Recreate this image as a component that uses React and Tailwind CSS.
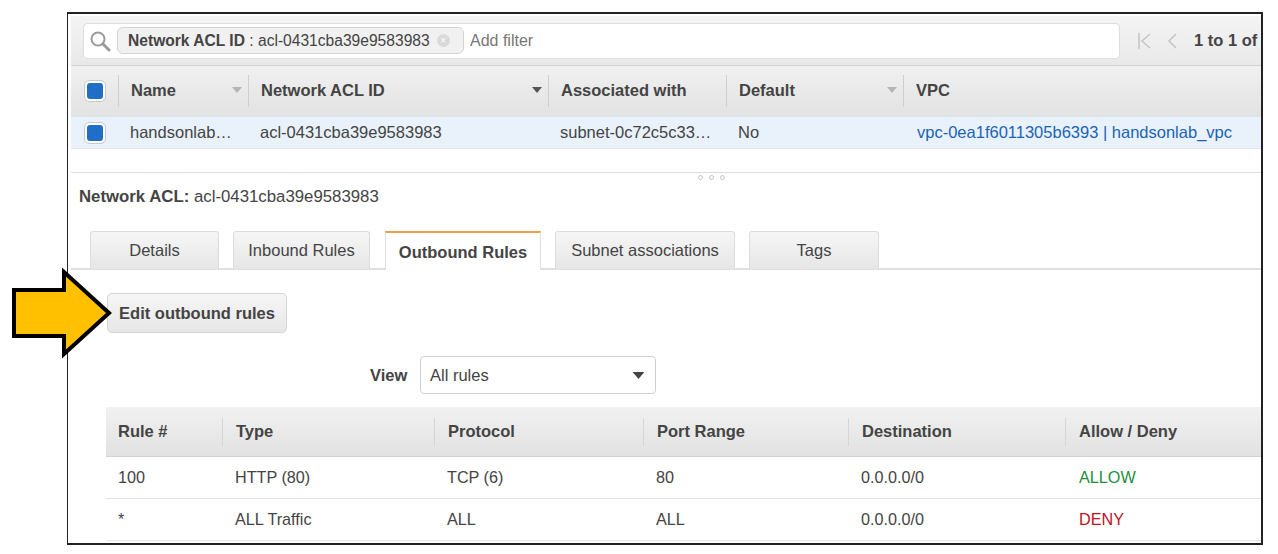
import React from 'react';

const headCols = [
  { label: 'Name', w: 'w-[130px]', caret: 'text-[#b5b5b5]' },
  { label: 'Network ACL ID', w: 'w-[300px]', caret: 'text-[#555]' },
  { label: 'Associated with', w: 'w-[178px]' },
  { label: 'Default', w: 'w-[177px]', caret: 'text-[#b5b5b5]' },
  { label: 'VPC', w: 'w-[355px]' },
];

const ruleCols = [
  { label: 'Rule #', w: 'w-[116px]', first: true },
  { label: 'Type', w: 'w-[212px]' },
  { label: 'Protocol', w: 'w-[209px]' },
  { label: 'Port Range', w: 'w-[205px]' },
  { label: 'Destination', w: 'w-[217px]' },
  { label: 'Allow / Deny', w: 'w-[196px]' },
];

const rules = [
  ['100', 'HTTP (80)', 'TCP (6)', '80', '0.0.0.0/0', 'ALLOW', 'text-[#1d8f3a]'],
  ['*', 'ALL Traffic', 'ALL', 'ALL', '0.0.0.0/0', 'DENY', 'text-[#c0121f]'],
];

const tabs = [
  { label: 'Details', w: 'w-[129px]' },
  { label: 'Inbound Rules', w: 'w-[137px]' },
  { label: 'Outbound Rules', w: 'w-[156px]', active: true },
  { label: 'Subnet associations', w: 'w-[180px]' },
  { label: 'Tags', w: 'w-[130px]' },
];

function Check() {
  return (
    <div className="flex h-[22px] w-[22px] items-center justify-center rounded-[5px] border border-[#c9c9c9] bg-white">
      <div className="h-[16px] w-[16px] rounded-[3px] bg-[#1f6fc9]" />
    </div>
  );
}

function Caret({ className }) {
  return (
    <svg width="10" height="6" viewBox="0 0 10 6" className={className}>
      <path d="M0 0h10L5 6z" fill="currentColor" />
    </svg>
  );
}

export default function App() {
  return (
    <div className="relative h-[554px] w-[1278px] overflow-hidden bg-white pl-[67px] pt-[12px] text-[16.5px] text-[#444] font-['Liberation_Sans',Arial,sans-serif]">
      <div className="h-[533px] w-[1196px] overflow-hidden border-2 border-[#222] border-l-[1.5px] pl-[3px] pt-[2px]">
        {/* filter bar */}
        <div className="flex h-[50px] items-center bg-gradient-to-b from-[#f4f4f4] to-[#e9e9e9] pl-[12px] border-b border-[#d4d4d4]">
          <div className="flex h-[36px] w-[1037px] shrink-0 items-center rounded-[4px] border border-[#dedede] bg-white pl-[5px]">
            <svg width="22" height="22" viewBox="0 0 22 22" fill="none" stroke="#9a9a9a">
              <circle cx="9" cy="9" r="6.5" strokeWidth="2" />
              <path d="M14 14l6 6" strokeWidth="3" strokeLinecap="round" />
            </svg>
            <div className="ml-[6px] flex h-[27px] w-[347px] items-center rounded-[6px] border border-[#d3d3d3] bg-[#f1f1f1] pl-[10px] text-[15.6px] whitespace-nowrap">
              <span className="font-bold">Network ACL ID</span>
              <span>&nbsp;: acl-0431cba39e9583983</span>
              <span className="ml-[7px] flex h-[13px] w-[13px] items-center justify-center rounded-full bg-[#d9d9d9] text-[10px] leading-none text-white">×</span>
            </div>
            <span className="ml-[6px] text-[16px] text-[#777]">Add filter</span>
          </div>
          <div className="ml-[17px] flex items-center whitespace-nowrap">
            <svg width="16" height="18" viewBox="0 0 16 18" fill="none" stroke="#c4c4c4" strokeWidth="1.5">
              <path d="M2 1v16M13 2L5 9l8 7" />
            </svg>
            <svg width="12" height="18" viewBox="0 0 12 18" fill="none" stroke="#c4c4c4" strokeWidth="1.5" className="ml-[13px]">
              <path d="M10 2L3 9l7 7" />
            </svg>
            <span className="ml-[16px] font-bold">1 to 1 of</span>
          </div>
        </div>

        {/* grid header */}
        <div className="flex h-[50px] items-center bg-gradient-to-b from-[#f1f1f1] to-[#e2e2e2]">
          <div className="flex w-[47px] justify-center">
            <Check />
          </div>
          {headCols.map((c) => (
            <div key={c.label} className={`flex h-[32px] items-center justify-between border-l border-[#cfcfcf] pb-[2px] pl-[12px] pr-[6px] font-bold ${c.w}`}>
              <span>{c.label}</span>
              {c.caret && <Caret className={c.caret} />}
            </div>
          ))}
        </div>

        {/* selected row */}
        <div className="flex h-[33px] items-center border-y border-[#dbe6f2] bg-[#e9f2fb]">
          <div className="flex w-[47px] justify-center">
            <Check />
          </div>
          <div className="w-[130px] pl-[12px]">handsonlab…</div>
          <div className="w-[300px] pl-[12px]">acl-0431cba39e9583983</div>
          <div className="w-[178px] pl-[12px]">subnet-0c72c5c33…</div>
          <div className="w-[177px] pl-[12px]">No</div>
          <div className="w-[355px] whitespace-nowrap pl-[14px] text-[#1b64b5]">vpc-0ea1f6011305b6393 | handsonlab_vpc</div>
        </div>

        {/* split handle */}
        <div className="relative mt-[23px] h-px bg-[#dcdcdc]">
          <div className="absolute left-[627px] top-[3px] flex gap-[6px]">
            <span className="h-[5px] w-[5px] rounded-full border border-[#c4c4c4]" />
            <span className="h-[5px] w-[5px] rounded-full border border-[#c4c4c4]" />
            <span className="h-[5px] w-[5px] rounded-full border border-[#c4c4c4]" />
          </div>
        </div>

        <div className="mt-[14px] pl-[8px] text-[16.8px] leading-[20px] whitespace-nowrap">
          <span className="font-bold">Network ACL:</span> acl-0431cba39e9583983
        </div>

        {/* tabs */}
        <div className="mt-[24px] flex h-[39px] gap-[14px] border-b-2 border-[#e0e0e0] pl-[19px]">
          {tabs.map((t) =>
            t.active ? (
              <div key={t.label} className={`ml-[1px] flex h-[39px] items-center justify-center border-x border-[#e0e0e0] border-t-2 border-t-[#eba144] bg-white pt-[1px] font-bold ${t.w}`}>
                {t.label}
              </div>
            ) : (
              <div key={t.label} className={`flex h-[38px] items-center justify-center whitespace-nowrap rounded-t-[3px] border border-b-0 border-[#dcdcdc] bg-gradient-to-b from-[#f6f6f6] to-[#e6e6e6] pb-[1px] ${t.w}`}>
                {t.label}
              </div>
            )
          )}
        </div>

        {/* edit button */}
        <div className="mt-[23px] pl-[36px]">
          <button className="h-[40px] w-[180px] rounded-[5px] border border-[#d4d4d4] bg-gradient-to-b from-[#f6f6f6] to-[#e7e7e7] pt-[1px] text-center font-bold text-[#444]">
            Edit outbound rules
          </button>
        </div>

        {/* view select */}
        <div className="mt-[23px] flex items-center pl-[299px]">
          <span className="w-[50px] pt-[1px] font-bold">View</span>
          <div className="flex h-[38px] w-[236px] items-center justify-between rounded-[4px] border border-[#cfcfcf] bg-white pl-[9px] pr-[10px] pt-[1px]">
            <span>All rules</span>
            <Caret className="h-[7px] w-[13px] text-[#444]" />
          </div>
        </div>

        {/* rules table */}
        <div className="ml-[35px] mt-[13px]">
          <div className="flex h-[50px] items-center border-b border-[#d2d2d2] bg-gradient-to-b from-[#f1f1f1] to-[#e2e2e2]">
            {ruleCols.map((c) => (
              <div key={c.label} className={`flex h-[28px] items-center font-bold ${c.first ? 'pl-[12px]' : 'border-l border-[#d6d6d6] pl-[13px]'} ${c.w}`}>
                {c.label}
              </div>
            ))}
          </div>
          {rules.map((r) => (
            <div key={r[0]} className="flex h-[42px] items-center border-b border-[#e3e3e3] text-[16.2px]">
              <div className="w-[116px] pl-[12px]">{r[0]}</div>
              <div className="w-[212px] pl-[13px]">{r[1]}</div>
              <div className="w-[209px] pl-[13px]">{r[2]}</div>
              <div className="w-[205px] pl-[13px]">{r[3]}</div>
              <div className="w-[217px] pl-[13px]">{r[4]}</div>
              <div className={`w-[196px] pl-[14px] ${r[6]}`}>{r[5]}</div>
            </div>
          ))}
        </div>
      </div>

      {/* callout arrow */}
      <svg width="104" height="94" viewBox="0 0 104 94" className="absolute left-[10px] top-[266px]">
        <path d="M4 24H54V6L99 47L54 88V70H4z" fill="#ffc000" stroke="#000" strokeWidth="4" />
      </svg>
    </div>
  );
}
